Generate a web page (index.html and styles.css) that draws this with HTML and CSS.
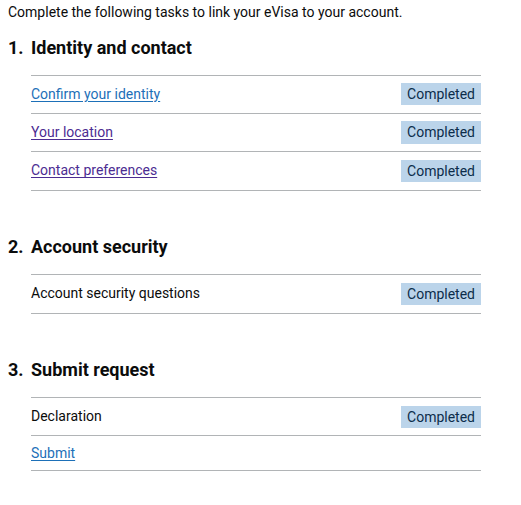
FILE: index.html
```html
<!DOCTYPE html>
<html lang="en">
<head>
<meta charset="utf-8">
<title>Link your eVisa</title>
<link rel="stylesheet" href="styles.css">
</head>
<body>
<main class="page">
  <p class="intro">Complete the following tasks to link your eVisa to your account.</p>
  <ol class="sections">
    <li class="section">
      <h2 class="section-title"><span class="num">1.</span>Identity and contact</h2>
      <ul class="task-list">
        <li class="task"><a class="link" href="#">Confirm your identity</a><strong class="tag">Completed</strong></li>
        <li class="task"><a class="link visited" href="#">Your location</a><strong class="tag">Completed</strong></li>
        <li class="task"><a class="link visited" href="#">Contact preferences</a><strong class="tag">Completed</strong></li>
      </ul>
    </li>
    <li class="section">
      <h2 class="section-title"><span class="num">2.</span>Account security</h2>
      <ul class="task-list">
        <li class="task"><span class="task-name">Account security questions</span><strong class="tag">Completed</strong></li>
      </ul>
    </li>
    <li class="section">
      <h2 class="section-title"><span class="num">3.</span>Submit request</h2>
      <ul class="task-list">
        <li class="task"><span class="task-name">Declaration</span><strong class="tag">Completed</strong></li>
        <li class="task"><a class="link" href="#">Submit</a></li>
      </ul>
    </li>
  </ol>
</main>
</body>
</html>
```
FILE: styles.css
```css
html, body {
  margin: 0;
  padding: 0;
  background: #ffffff;
}
body {
  font-family: Roboto, "Noto Sans", "Liberation Sans", Arial, sans-serif;
  color: #0b0c0c;
}
.page {
  width: 473px;
  padding: 0 8px;
}
.intro {
  margin: 0 0 13.5px 0;
  padding-top: 2px;
  font-size: 14px;
  line-height: 20px;
}
.sections {
  list-style: none;
  margin: 0;
  padding: 0;
}
.section {
  margin: 0 0 44.5px 0;
}
.section-title {
  display: flex;
  margin: 0 0 15px 0;
  font-size: 18px;
  line-height: 24px;
  font-weight: 700;
}
.num {
  width: 23px;
}
.task-list {
  list-style: none;
  margin: 0 0 0 23px;
  padding: 0;
  border-top: 1px solid #b1b4b6;
}
.task {
  display: flex;
  justify-content: space-between;
  align-items: center;
  padding: 7.5px 0;
  border-bottom: 1px solid #b1b4b6;
  font-size: 14px;
  line-height: 19px;
}
.link {
  color: #1d70b8;
  text-decoration: underline;
  text-underline-offset: 2px;
}
.link.visited {
  color: #4c2c92;
}
.tag {
  background: #bbd4ea;
  color: #0c2d4a;
  font-weight: 400;
  font-size: 14px;
  line-height: 18px;
  padding: 2px 6px 2.4px;
}
```
